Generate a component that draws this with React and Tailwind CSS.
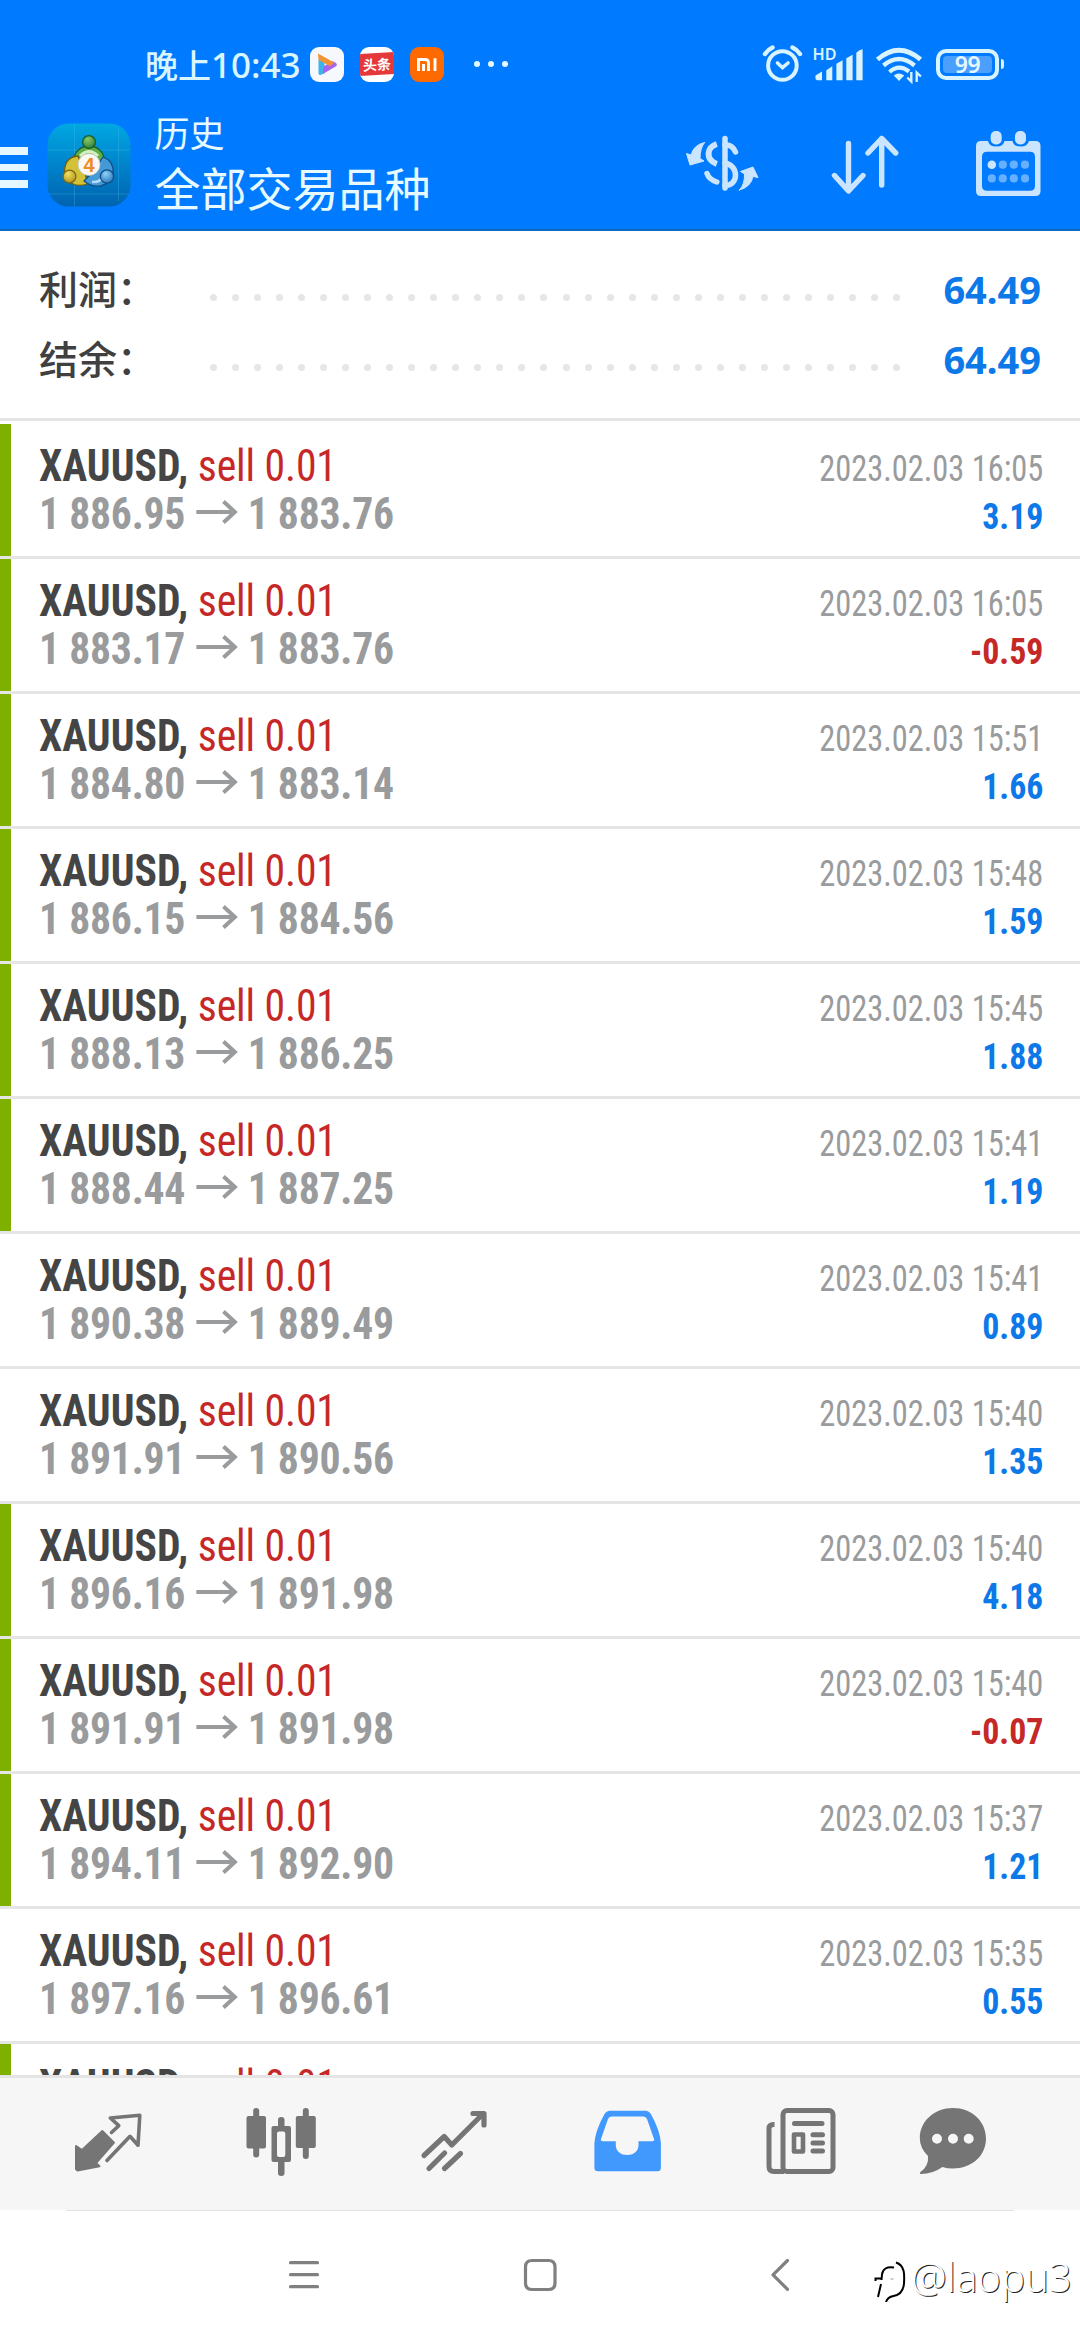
const trades = [
  ['1 886.95', '1 883.76', '2023.02.03 16:05', '3.19', true],
  ['1 883.17', '1 883.76', '2023.02.03 16:05', '-0.59', true],
  ['1 884.80', '1 883.14', '2023.02.03 15:51', '1.66', true],
  ['1 886.15', '1 884.56', '2023.02.03 15:48', '1.59', true],
  ['1 888.13', '1 886.25', '2023.02.03 15:45', '1.88', true],
  ['1 888.44', '1 887.25', '2023.02.03 15:41', '1.19', true],
  ['1 890.38', '1 889.49', '2023.02.03 15:41', '0.89', false],
  ['1 891.91', '1 890.56', '2023.02.03 15:40', '1.35', false],
  ['1 896.16', '1 891.98', '2023.02.03 15:40', '4.18', true],
  ['1 891.91', '1 891.98', '2023.02.03 15:40', '-0.07', true],
  ['1 894.11', '1 892.90', '2023.02.03 15:37', '1.21', true],
  ['1 897.16', '1 896.61', '2023.02.03 15:35', '0.55', false],
  ['', '', '', '', true],
];

function Battery() {
  return (
    <div className="ml-[14px] flex items-center">
      <div className="flex h-[31px] w-[63px] items-center justify-center rounded-[10px] border-4 border-[#d9f3ff] p-[3px]">
        <div className="flex h-[17px] w-full items-center justify-center rounded-[4px] bg-[#4a9fff] font-['Noto_Sans'] text-[23px] leading-[17px] font-semibold tracking-[-0.5px] text-[#e4f8ff]">99</div>
      </div>
      <div className="ml-[2px] h-[10px] w-[3px] rounded-r-[3px] bg-[#d9f3ff]" />
    </div>
  );
}

function StatusBar() {
  return (
    <div className="flex h-[128px] items-center pr-[76px] pl-[145px] text-[#d9f6ff]">
      <span className="w-[165px] font-['Noto_Sans','Noto_Sans_CJK_SC',sans-serif] text-[35px] leading-[50px] font-medium whitespace-nowrap">
        <span className="font-['Noto_Sans_CJK_SC'] text-[33px]">晚上</span>10:43
      </span>
      {/* video app */}
      <svg className="h-[35px] w-[34px]" viewBox="0 0 34 35">
        <rect width="34" height="35" rx="9" fill="#f7f8fc" />
        <path d="M8.500 12.500v13.500q0 3 3 1.500l3-1.600v-10.500z" fill="#3cb4ea" />
        <path d="M13 27l12.500-7.500q2.800-1.800 0-3.800l-3-1.700-9 5.500z" fill="#a565f0" />
        <path d="M8 6.500l16.500 9.300-4.500 3.400-11.500-6.500z" fill="#f29434" />
      </svg>
      {/* headlines app */}
      <div className="ml-4 flex h-[35px] w-[34px] items-center justify-center overflow-hidden rounded-[9px] bg-white">
        <div className="flex h-[22px] w-[34px] shrink-0 -skew-y-3 items-center justify-center bg-[#e5383b] font-['Noto_Sans_CJK_SC'] text-[14px] leading-[22px] font-bold text-white">头条</div>
      </div>
      <svg className="ml-4 h-[35px] w-[34px]" viewBox="0 0 34 35">
        <rect width="34" height="35" rx="9" fill="#ff6a00" />
        <path d="M8.500 24V12.500H15q3.500 0 3.500 3.500V24M13.500 17V24M25 11.200V24" fill="none" stroke="#fff" strokeWidth="2.900" />
      </svg>
      <div className="ml-[30px] flex gap-[8px]">
        <i className="size-[6px] rounded-full bg-[#e4f8ff]" />
        <i className="size-[6px] rounded-full bg-[#e4f8ff]" />
        <i className="size-[6px] rounded-full bg-[#e4f8ff]" />
      </div>
      <div className="ml-auto flex items-center">
        <svg className="h-10 w-[106px] overflow-visible" viewBox="759 44 106 40" fill="none" stroke="#d9f3ff" strokeLinecap="round">
          <circle cx="780.400" cy="65.500" r="14.300" strokeWidth="4" />
          <path d="M775.500 63l5 4.700 5.500-4.700" strokeWidth="3.600" />
          <path d="M763 54q3-4.500 7.500-6.500M798 54q-3-4.500-7.500-6.500" strokeWidth="4.400" />
          <g stroke="none" fill="#d9f3ff">
            <text x="810.500" y="60" fontSize="16.500" fontWeight="600" fontFamily="Noto Sans" textLength="24" lengthAdjust="spacingAndGlyphs">HD</text>
            <path d="M813.500 79v-3.500l6.500-4v8.800h-5zM824.300 80.300v-10l6-4v14zM834.400 80.300v-16.500l6.200-3.500v20zM844.300 80.300v-22l6.300-3.500v25.500zM854.300 80.300v-27.500q3-3.500 6.300-3.500v31z" />
          </g>
        </svg>
        <svg className="ml-[7px] h-10 w-12" viewBox="872 44 48 40" fill="none" stroke="#d9f3ff">
          <path d="M875.500 59.500q21.500-18.500 43 0" strokeWidth="4.800" />
          <path d="M881.500 65.500q15.500-13 31 0" strokeWidth="4.400" />
          <path d="M887.500 72q9.500-8.500 19.500-.5" strokeWidth="4.200" />
          <path d="M897 81l-5.200-5.500q5-4 10.400 0z" fill="#d9f3ff" stroke="none" />
          <path d="M909.300 72v9.500l-4-4M914.700 82v-9.500l4.200 4" strokeWidth="2.400" />
        </svg>
        <Battery />
      </div>
    </div>
  );
}

function AppLogo() {
  return (
    <svg className="ml-[19px] h-[84px] w-[84px]" viewBox="0 0 84 84">
      <defs>
        <linearGradient id="tile" x1="0" y1="0" x2="0" y2="1">
          <stop offset="0" stopColor="#00a8e2" /><stop offset=".5" stopColor="#0083cb" /><stop offset="1" stopColor="#0063b0" />
        </linearGradient>
        <radialGradient id="green" cx=".4" cy=".3" r=".8"><stop offset="0" stopColor="#8bc96e" /><stop offset="1" stopColor="#237a2c" /></radialGradient>
        <radialGradient id="gold" cx=".4" cy=".3" r=".8"><stop offset="0" stopColor="#f2e15f" /><stop offset="1" stopColor="#a98a16" /></radialGradient>
        <radialGradient id="sky" cx=".4" cy=".3" r=".8"><stop offset="0" stopColor="#8fd0f5" /><stop offset="1" stopColor="#1f71b5" /></radialGradient>
      </defs>
      <rect x=".5" y=".5" width="83" height="83" rx="21" fill="url(#tile)" />
      <path d="M27.500 1v82M71.500 6v72M1 27h82M2 71h80" stroke="#4cc0ea" strokeOpacity=".3" />
      <g strokeWidth="1.300">
        <path d="M26.500 38a15.500 15 0 0 1 31 0q1 6-4 12H30q-4-6-3.500-12z" fill="#5fae48" stroke="#1a5c28" />
        <path d="M33 33q9-9 18 0" fill="none" stroke="#d5efc0" strokeWidth="3" />
        <path d="M31 33q-13 1-13.500 15c0 12 12 17 23 13l-2-9z" fill="#d3c138" stroke="#6e5f12" />
        <path d="M56 34q11 4 10 16c-3 14-18 17-29 8l8-8z" fill="#439ad6" stroke="#134f86" />
        <path d="M45 59q10 1 14-10" fill="none" stroke="#b4dcf6" strokeWidth="2.500" />
        <circle cx="42" cy="19" r="6.400" fill="url(#green)" stroke="#1a5c28" />
        <circle cx="22.500" cy="53.500" r="6.400" fill="url(#gold)" stroke="#7e6a12" />
        <circle cx="60" cy="53.500" r="6.600" fill="url(#sky)" stroke="#134f86" />
        <circle cx="42" cy="41.500" r="11" fill="#fbf7f2" stroke="#b9c4b5" strokeWidth=".8" />
      </g>
      <text x="42" y="49" textAnchor="middle" fontFamily="Liberation Sans" fontWeight="700" fontSize="20" fill="#f08a24">4</text>
    </svg>
  );
}

function TitleBar() {
  return (
    <div className="flex h-[103px] border-b-2 border-[#1068c0]">
      <div className="mt-[19px] flex w-[27.500px] flex-col gap-[9px]">
        <i className="h-[7.500px] bg-[#e6f7ff]" />
        <i className="h-[7.500px] bg-[#e6f7ff]" />
        <i className="h-[7.500px] bg-[#e6f7ff]" />
      </div>
      <div className="-mt-[5px]"><AppLogo /></div>
      <div className="-mt-[19px] ml-[24px] font-['Noto_Sans_CJK_SC',sans-serif] text-[#e6faff]">
        <div className="text-[35px] leading-[46px]">历史</div>
        <div className="text-[46px] leading-[62px]">全部交易品种</div>
      </div>
      <svg className="ml-auto h-[76px] w-[364px] shrink-0" viewBox="680 128 364 76" fill="none" stroke="#cbe5ff" strokeLinecap="round" strokeLinejoin="round">
        <g strokeWidth="5.500">
          <path d="M725 138.500V188" />
          <path d="M725 145q7.500-.500 10.500 7" />
          <path d="M725 163c14 2.500 14 22.500 0 22.500" />
          <path d="M716.800 144c-10.500 3.500-11.500 15.500 0 20" strokeLinecap="butt" strokeWidth="6" />
          <path d="M707 173.500q2 6 9.800 8.500" strokeWidth="5.500" />
        </g>
        <g fill="#cbe5ff" stroke="#cbe5ff" strokeWidth="1">
          <path d="M704.500 142.500q-11 2.500-13.500 12.500l-4.500-1.500 3.500 11.500 14-4-4-2.500q0-10 4.500-16z" />
          <path d="M739.500 190q11.500-3 13.500-13.500l5 1-5-10.500-12.500 4.500 4 2.500q.5 10-5 16z" />
        </g>
        <path d="M848.500 143.500V190M834.500 175.500l14 15.500 14.500-15.500M881.700 185V138.500M868 153l13.700-14.500 14 14.500" strokeWidth="5.400" />
        <g stroke="none" fill="#cbe5ff">
          <path fillRule="evenodd" d="M981 141h7q1 5.500 8.300 5.500t8.200-5.500h8q1 5.500 8 5.500t8.500-5.500h6.500q5 0 5 5v45q0 5-5 5h-54.500q-5 0-5-5v-45q0-5 5-5zM987 151.800q-5 0-5 5v29q0 5 5 5h43q5 0 5-5v-29q0-5-5-5z" />
          <rect x="990.700" y="131" width="11" height="13.500" rx="5" />
          <rect x="1015" y="131" width="11" height="13.500" rx="5" />
          <circle cx="991.800" cy="164.700" r="4.300" />
          <g fill="#66b0ff">
            <circle cx="1002.800" cy="164.700" r="4.100" /><circle cx="1013.800" cy="164.700" r="4.100" /><circle cx="1025" cy="164.700" r="4.100" />
            <circle cx="991.800" cy="178.400" r="4.100" /><circle cx="1002.800" cy="178.400" r="4.100" /><circle cx="1013.800" cy="178.400" r="4.100" /><circle cx="1025" cy="178.400" r="4.100" />
          </g>
        </g>
      </svg>
      <div className="w-9 shrink-0" />
    </div>
  );
}

function SummaryRow({ label }) {
  return (
    <div className="flex h-[70px] items-center">
      <span className="-mt-[5px] w-[171px] font-['Noto_Sans_CJK_SC'] text-[39px] leading-[70px] font-medium text-[#404040]">{label}</span>
      <div className="mt-[17px] flex w-[690px] justify-between">
        {Array.from({ length: 32 }, (_, i) => <i key={i} className="size-[7px] rounded-full bg-[#e6e6e6]" />)}
      </div>
      <span className="ml-auto font-['Noto_Sans'] text-[38px] leading-[70px] font-bold text-[#0d78e8]">64.49</span>
    </div>
  );
}

function Arrow() {
  return (
    <svg className="-mt-[5px] mr-[10px] ml-[12px] h-[26px] w-[44px]" viewBox="0 0 42 26" preserveAspectRatio="none" fill="none" stroke="#999b9d">
      <path d="M0 13h39" strokeWidth="4" />
      <path d="M27.500 2.500L39 13 27.500 23.500" strokeWidth="4" />
    </svg>
  );
}

function TradeRow({ trade }) {
  const [open, close, time, profit, marked] = trade;
  return (
    <div className="flex h-[135px] shrink-0 border-b-[3px] border-[#e5e5e5]">
      <div className={marked ? 'w-[11px] bg-[#7fb000]' : 'w-[11px]'} />
      <div className="flex flex-1 justify-between pr-[37px] pl-[28px] font-['Roboto_Condensed']">
        <div className="origin-left scale-x-[0.947] pt-[17px]">
          <div className="flex h-[49px] text-[44px] leading-[50px] whitespace-pre text-[#c62828]">
            <span className="font-bold text-[#454545]">XAUUSD, </span>
            <span className="tracking-[-0.1px]">sell 0.01</span>
          </div>
          {open && (
            <div className="flex h-12 items-center text-[44px] leading-[50px] font-bold tracking-[-0.25px] text-[#999b9d]">
              <span>{open}</span><Arrow /><span>{close}</span>
            </div>
          )}
        </div>
        <div className="pt-5 text-right">
          <div className="h-12 origin-right scale-x-[0.888] text-[36.500px] leading-[50px] text-[#999b9d]">{time}</div>
          <div className={profit[0] === '-' ? 'origin-right scale-x-[0.94] text-[36px] leading-[50px] font-bold text-[#c62828]' : 'origin-right scale-x-[0.94] text-[36px] leading-[50px] font-bold text-[#0d78e8]'}>{profit}</div>
        </div>
      </div>
    </div>
  );
}

function TabBar() {
  return (
    <div className="h-[135px] border-t-[3px] border-[#e4e4e4] bg-[#f6f6f6]">
      <svg className="h-[132px] w-[1080px]" viewBox="0 2078 1080 132" fill="none" stroke="#757575" strokeLinecap="round" strokeLinejoin="round">
        <path d="M102.300 2131L114 2142.700 96 2163l3.500 3.200-22 4.300-1.500-1.500v-23l6 4z" fill="#757575" strokeWidth="2" />
        <path d="M111.500 2132.500l7.300-6.800-8.500-7.700 29.500-2.700-1.800 30-8-9L107 2160.500" strokeWidth="3.600" />
        <g fill="#757575" stroke="none">
          <rect x="246.500" y="2116" width="19.500" height="32.500" rx="2" /><rect x="253.200" y="2108" width="6" height="49.500" rx="3" />
          <rect x="295.800" y="2116" width="20" height="32" rx="2" /><rect x="302.800" y="2108" width="6" height="51" rx="3" />
          <rect x="278" y="2117" width="6.500" height="13" rx="3" /><rect x="278" y="2160" width="6.500" height="16" rx="3" />
          <path fillRule="evenodd" d="M273.500 2126h15.500q2 0 2 2v32q0 2-2 2h-15.500q-2 0-2-2v-32q0-2 2-2zM279 2131.500q-2 0-2 2v21.500q0 2 2 2h4.300q2 0 2-2v-21.500q0-2-2-2z" />
        </g>
        <path d="M424 2155.500l20.200-19 7.600 8.500 31-31M473 2113.500h11v11.500M429 2168.500l15.600-15.500M444.500 2168.500l16-15" strokeWidth="5.200" />
        <path fillRule="evenodd" stroke="none" fill="#4299fd" d="M610 2110.700h35.500q3.500 0 5.500 3.500 9 16 9.900 29v24.600q0 3.500-3.500 3.500h-59.500q-3.500 0-3.500-3.500v-24.600q1-13 10-29 2-3.500 5.600-3.500zM611.500 2116.500q-2.500 0-3.500 2.500l-7 20q-.7 2.200 2 2.200h12.800v4c0 13 22.700 13 22.700 0v-4h13.500q2.700 0 2-2.200l-7-20q-1-2.500-3.500-2.500z" />
        <rect x="783" y="2110.500" width="50" height="61" rx="4" strokeWidth="5" />
        <path d="M774.500 2124.500h-1q-4.500 0-4.500 4v38q0 5 5 5h10" strokeWidth="5" strokeLinecap="butt" />
        <path d="M794.500 2123.500h27.500M813 2134.700h9.500M813 2142.900h9.500M813 2151h9.500" strokeWidth="5" />
        <rect x="794" y="2134.500" width="9" height="17" strokeWidth="4.600" />
        <path stroke="none" fill="#757575" fillRule="evenodd" d="M953 2108c18.500 0 33 13 33 30.500s-14.500 30-33 30q-6 0-10.500-1.500-10 7-21.500 7-2-.5-.5-2 8.500-6 7.500-16-8.200-8-8.200-18c0-17 14.700-30 33.200-30zM937 2133.700a5 5 0 1 0 0 10 5 5 0 1 0 0-10zM953 2133.700a5 5 0 1 0 0 10 5 5 0 1 0 0-10zM968.700 2133.700a5 5 0 1 0 0 10 5 5 0 1 0 0-10z" />
      </svg>
    </div>
  );
}

function SystemNav() {
  return (
    <div className="flex h-[130px] flex-col">
      <div className="mx-[66px] h-px bg-[#e2e2e2]" />
      <div className="flex flex-1">
        <svg className="h-[129px] w-[870px]" viewBox="0 2211 870 129" fill="none" stroke="#808080" strokeWidth="3.200" strokeLinecap="round" strokeLinejoin="round">
          <path d="M290.500 2262.700h27M290.500 2274.700h27M290.500 2286.700h27" />
          <path d="M532 2260.500h16.500q6.500 0 6.500 6.500v16q0 6.500-6.500 6.500H532q-6.500 0-6.500-6.500v-16q0-6.500 6.500-6.500z" />
          <path d="M787.500 2260.500l-14.500 14.300 14.500 14.500" />
        </svg>
        <div className="mt-[43px] flex">
          <svg className="h-[48px] w-[41px]" viewBox="870 2254 41 48" fill="none" stroke="#000" strokeWidth="2">
            <path d="M894 2267.500q-11-1.500-12 7l-.5 5.500M875.500 2281v-2.500h7M881 2284l-3 13" />
            <path d="M896 2262.500c9 3 8.500 12 8 21q-1 11-10.500 12.500-6 1-7.500 6" />
            <path d="M890.500 2279h3" strokeWidth="1" stroke="#999" />
          </svg>
          <span className="font-['Noto_Sans'] text-[40px] leading-[46px] font-light text-white [text-shadow:1px_1px_0_#222]">@laopu3</span>
        </div>
      </div>
    </div>
  );
}

export default function App() {
  return (
    <div className="flex h-[2340px] w-[1080px] flex-col overflow-hidden bg-white">
      <header className="bg-[#007bff]">
        <StatusBar />
        <TitleBar />
      </header>
      <section className="h-[190px] border-b-[3px] border-[#e5e5e5] pt-[23px] pr-[39px] pl-[39px]">
        <SummaryRow label="利润：" />
        <SummaryRow label="结余：" />
      </section>
      <main className="flex h-[1654px] flex-col overflow-hidden pt-[3px]">
        {trades.map((t, i) => <TradeRow key={i} trade={t} />)}
      </main>
      <TabBar />
      <SystemNav />
    </div>
  );
}
